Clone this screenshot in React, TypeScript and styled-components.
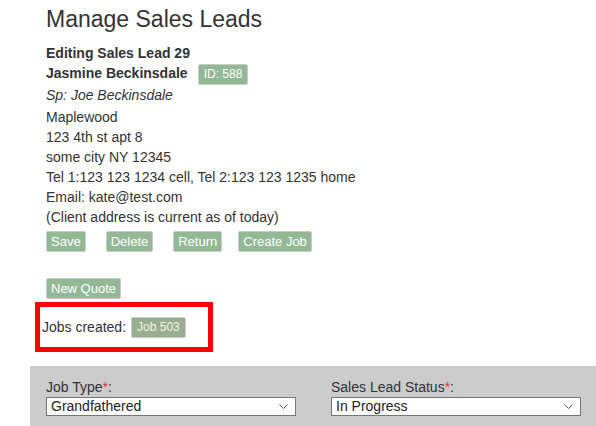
import React from "react";
import styled, { createGlobalStyle } from "styled-components";

const Global = createGlobalStyle`
  html, body { margin: 0; padding: 0; background: #fff; }
  body { font-family: "Liberation Sans", Arial, sans-serif; color: #333; overflow: hidden; }
`;

const Page = styled.div`
  width: 596px;
  height: 426px;
  overflow: hidden;
`;

const Content = styled.div`
  padding-left: 46px;
`;

const Title = styled.h1`
  margin: 0;
  padding-top: 6px;
  font-size: 23px;
  font-weight: normal;
  line-height: 26px;
  height: 37px;
  color: #333;
`;

const BoldLine = styled.div<{ $h: number }>`
  font-size: 14px;
  font-weight: bold;
  line-height: 20px;
  height: ${(p) => p.$h}px;
  display: flex;
  align-items: flex-start;
  gap: 10px;
`;

const Line = styled.div<{ $h?: number; $italic?: boolean }>`
  font-size: 14px;
  line-height: 20px;
  height: ${(p) => p.$h ?? 20}px;
  font-style: ${(p) => (p.$italic ? "italic" : "normal")};
`;

const Badge = styled.span<{ $bg: string; $fg: string }>`
  display: inline-flex;
  align-items: center;
  height: 19px;
  margin-top: 1px;
  padding: 0 5px;
  background: ${(p) => p.$bg};
  color: ${(p) => p.$fg};
  border: 1px solid #c9cfc6;
  border-radius: 2px;
  font-size: 12px;
  font-weight: normal;
  line-height: 19px;
`;

const ButtonRow = styled.div<{ $top: number }>`
  display: flex;
  margin-top: ${(p) => p.$top}px;
`;

const Button = styled.button<{ $gap?: number }>`
  font-family: "Liberation Sans", Arial, sans-serif;
  font-size: 13px;
  height: 21px;
  padding: 0 4px;
  margin: 0 ${(p) => p.$gap ?? 0}px 0 0;
  background: #93b896;
  color: #fff;
  border: 1px solid #c6cec4;
  border-radius: 2px;
  line-height: 19px;
`;

const JobsBox = styled.div`
  margin: 3px 0 0 -11px;
  width: 166px;
  height: 40px;
  border: 5px solid #ff0000;
  display: flex;
  align-items: center;
  gap: 5px;
  padding-left: 2px;
  font-size: 14px;
`;

const Band = styled.div`
  margin: 14px 0 0 30px;
  background: #cccccc;
  height: 80px;
  padding: 12px 0 0 16px;
  display: flex;
  gap: 35px;
`;

const Field = styled.div`
  width: 250px;
  display: flex;
  flex-direction: column;
`;

const Label = styled.div`
  font-size: 14px;
  line-height: 18px;
  height: 19px;
  color: #333;
`;

const Req = styled.span`
  color: #e0342a;
`;

const SelectBox = styled.div`
  position: relative;
  box-sizing: border-box;
  height: 19px;
  background: #fff;
  border: 1px solid #767676;
  font-size: 14px;
  line-height: 17px;
  padding-left: 4px;
  color: #222;
`;

const Chevron = styled.svg`
  position: absolute;
  right: 7px;
  top: 6px;
`;

function Select({ value }: { value: string }) {
  return (
    <SelectBox>
      {value}
      <Chevron width="9" height="6" viewBox="0 0 9 6">
        <path d="M0.5 0.5 L4.5 4.5 L8.5 0.5" fill="none" stroke="#555" strokeWidth="1" />
      </Chevron>
    </SelectBox>
  );
}

export default function App() {
  return (
    <Page>
      <Global />
      <Content>
        <Title>Manage Sales Leads</Title>
        <BoldLine $h={20}>Editing Sales Lead 29</BoldLine>
        <BoldLine $h={22}>
          Jasmine Beckinsdale
          <Badge $bg="#93b896" $fg="#fff">ID: 588</Badge>
        </BoldLine>
        <Line $h={22} $italic>Sp: Joe Beckinsdale</Line>
        <Line>Maplewood</Line>
        <Line>123 4th st apt 8</Line>
        <Line>some city NY 12345</Line>
        <Line>Tel 1:123 123 1234 cell, Tel 2:123 123 1235 home</Line>
        <Line>Email: kate@test.com</Line>
        <Line>(Client address is current as of today)</Line>
        <ButtonRow $top={4}>
          <Button $gap={20}>Save</Button>
          <Button $gap={20}>Delete</Button>
          <Button $gap={16}>Return</Button>
          <Button>Create Job</Button>
        </ButtonRow>
        <ButtonRow $top={26}>
          <Button>New Quote</Button>
        </ButtonRow>
        <JobsBox>
          Jobs created:
          <Badge $bg="#97ae8f" $fg="#f6f3e2">Job 503</Badge>
        </JobsBox>
      </Content>
      <Band>
        <Field>
          <Label>
            Job Type<Req>*</Req>:
          </Label>
          <Select value="Grandfathered" />
        </Field>
        <Field>
          <Label>
            Sales Lead Status<Req>*</Req>:
          </Label>
          <Select value="In Progress" />
        </Field>
      </Band>
    </Page>
  );
}
